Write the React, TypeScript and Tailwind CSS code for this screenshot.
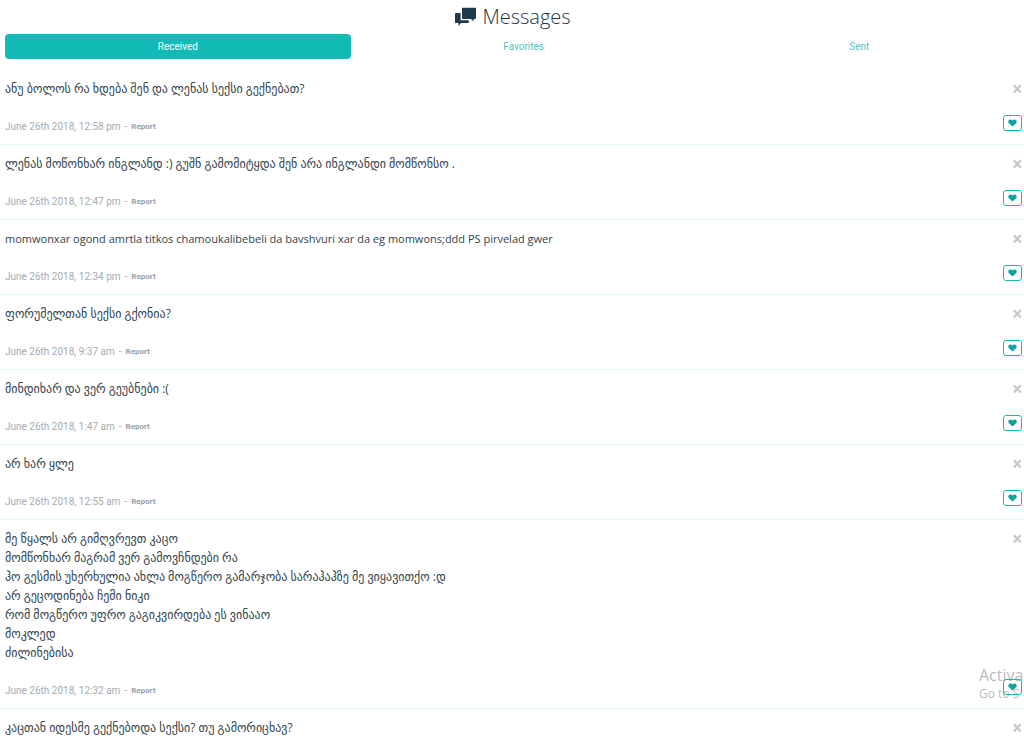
import { useState } from 'react';

interface Message {
  id: number;
  lines: string[];
  latin?: boolean;
  sentAt?: string;
}

const TABS = ['Received', 'Favorites', 'Sent'] as const;
type Tab = (typeof TABS)[number];

const MESSAGES: Message[] = [
  { id: 1, lines: ['ანუ ბოლოს რა ხდება შენ და ლენას სექსი გექნებათ?'], sentAt: 'June 26th 2018, 12:58 pm' },
  {
    id: 2,
    lines: ['ლენას მოწონხარ ინგლანდ :) გუშნ გამომიტყდა შენ არა ინგლანდი მომწონსო .'],
    sentAt: 'June 26th 2018, 12:47 pm',
  },
  {
    id: 3,
    lines: ['momwonxar ogond amrtla titkos chamoukalibebeli da bavshvuri xar da eg momwons;ddd PS pirvelad gwer'],
    latin: true,
    sentAt: 'June 26th 2018, 12:34 pm',
  },
  { id: 4, lines: ['ფორუმელთან სექსი გქონია?'], sentAt: 'June 26th 2018, 9:37 am' },
  { id: 5, lines: ['მინდიხარ და ვერ გეუბნები :('], sentAt: 'June 26th 2018, 1:47 am' },
  { id: 6, lines: ['არ ხარ ყლე'], sentAt: 'June 26th 2018, 12:55 am' },
  {
    id: 7,
    lines: [
      'მე წყალს არ გიმღვრევთ კაცო',
      'მომწონხარ მაგრამ ვერ გამოვჩნდები რა',
      'ჰო გესმის უხერხულია ახლა მოგწერო გამარჯობა სარაჰაჰზე მე ვიყავითქო :დ',
      'არ გეცოდინება ჩემი ნიკი',
      'რომ მოგწერო უფრო გაგიკვირდება ეს ვინააო',
      'მოკლედ',
      'ძილინებისა',
    ],
    sentAt: 'June 26th 2018, 12:32 am',
  },
  { id: 8, lines: ['კაცთან იდესმე გექნებოდა სექსი? თუ გამორიცხავ?'] },
];

function ChatIcon() {
  return (
    <svg viewBox="0 0 21 20" className="h-5 w-[21px] fill-[#1f3a4a]" aria-hidden="true">
      <path d="M5.6 6v7.2h8.2v1.9c0 .6-.4 1-1 1H6L3.4 19v-2.900H1c-.6 0-1-.4-1-1V7c0-.6.4-1 1-1z" />
      <path d="M8 .8h12c.6 0 1 .4 1 1v9.200c0 .6-.4 1-1 1h-1.400v2.600L16 12H8c-.6 0-1-.4-1-1V1.800c0-.6.4-1 1-1z" />
    </svg>
  );
}

function HeartIcon() {
  return (
    <svg viewBox="0 0 9 8" className="h-2 w-[9px] fill-current" aria-hidden="true">
      <path d="M4.500 7.500 1.200 4.500C-.8 2.600.8.500 2.500.500c.9 0 1.600.5 2 1.200.4-.7 1.100-1.200 2-1.200 1.700 0 3.300 2.100 1.300 4z" />
    </svg>
  );
}

function MessageRow({ message }: { message: Message }) {
  return (
    <li className="flex justify-between border-b border-[#e3f6f6] pt-[9px] pr-[2px] pb-2 pl-[5px] last:border-b-0">
      <div>
        <p
          className={`font-['Open_Sans','DejaVu_Sans',sans-serif] leading-[19px] text-[#33434d] ${
            message.latin ? 'text-[11px]' : 'text-[12px]'
          }`}
        >
          {message.lines.map((line) => (
            <span key={line} className="block h-[19px]">{line}</span>
          ))}
        </p>
        {message.sentAt && (
          <p className="mt-[19px] flex h-[19px] items-center gap-1 text-[10px] leading-[19px] text-[#a3abb2]">
            <span>{message.sentAt}</span>
            <span>-</span>
            <button type="button" className="text-[8px] font-bold text-[#98a0a8]">Report</button>
          </p>
        )}
      </div>
      <div className="flex flex-col items-end justify-between">
        <button type="button" aria-label="Delete" className="text-[18px] leading-[19px] font-bold text-[#c8c8c8]">
          ×
        </button>
        {message.sentAt && (
          <button
            type="button"
            aria-label="Favorite"
            className="mb-[5px] flex h-4 w-[19px] items-center justify-center rounded-[3px] border border-[#14b9b5] bg-white text-[#0fa3a0]"
          >
            <HeartIcon />
          </button>
        )}
      </div>
    </li>
  );
}

export default function App() {
  const [tab, setTab] = useState<Tab>('Received');

  return (
    <div className="relative h-screen overflow-hidden bg-white font-[Roboto,'DejaVu_Sans',sans-serif]">
      <h1 className="flex h-[34px] items-center justify-center gap-[6px] pl-[2px] font-['Open_Sans',sans-serif] text-[20px] leading-[34px] font-light text-[#1f3340]">
        <ChatIcon />
        Messages
      </h1>

      <nav className="flex pr-[2px] pl-[5px]">
        {TABS.map((name) => (
          <button
            key={name}
            type="button"
            onClick={() => setTab(name)}
            className={`h-[25px] rounded text-[10px] last:flex-1 ${
              tab === name ? 'basis-[34%] bg-[#12bab5] text-white' : 'basis-[34%] text-[#4fc4c4]'
            }`}
          >
            {name}
          </button>
        ))}
      </nav>

      <ul className="mt-[11px]">
        {MESSAGES.map((message) => (
          <MessageRow key={message.id} message={message} />
        ))}
      </ul>

      {/* System watermark running off the right edge */}
      <div className="pointer-events-none absolute right-0 bottom-10 w-[45px] overflow-hidden font-['Open_Sans',sans-serif] whitespace-nowrap text-[#8a8a8a]/60">
        <p className="text-[16px] leading-[20px]">Activa</p>
        <p className="text-[12px] leading-[18px]">Go to S</p>
      </div>
    </div>
  );
}
